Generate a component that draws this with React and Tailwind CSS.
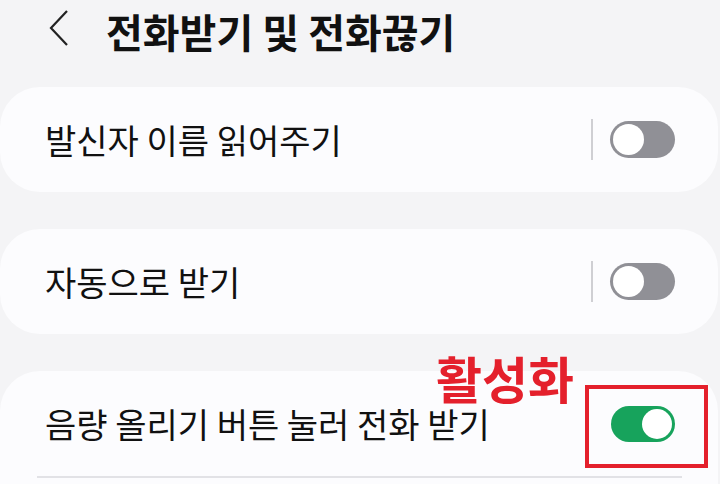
const font = { fontFamily: '"Noto Sans CJK KR", "Noto Sans", sans-serif' };

function Toggle({ on }) {
  if (on) {
    return (
      <div className="w-[64px] h-[36px] rounded-full bg-[#17a35c] flex items-center justify-end pr-[3px]">
        <div className="w-[30px] h-[30px] rounded-full bg-white" />
      </div>
    );
  }
  return (
    <div className="w-[65px] h-[37px] rounded-full bg-[#909096] flex items-center pl-[3px]">
      <div className="w-[31px] h-[31px] rounded-full bg-white" />
    </div>
  );
}

function Row({ label, on, divider }) {
  return (
    <div className="h-[105px] flex items-center pl-[45px] pr-[43px]">
      <span className="flex-1 text-[34px] text-[#111] leading-none">{label}</span>
      {divider && <div className="w-[2px] h-[41px] bg-[#cfcfd3] mr-[17px]" />}
      <Toggle on={on} />
    </div>
  );
}

export default function App() {
  return (
    <div className="w-[720px] h-[484px] overflow-hidden bg-[#f4f4f6]" style={font}>

      {/* HEADER */}
      <div className="h-[64px] flex items-center pl-[49px]">
        <svg width="20" height="36" viewBox="0 0 20 36" className="mt-[-8px]">
          <path d="M18 1 L2 18 L18 35" fill="none" stroke="#222" strokeWidth="2.2" />
        </svg>
        <h1 className="ml-[37px] text-[40px] font-bold text-[#111] leading-none mt-[-2px]">
          전화받기 및 전화끊기
        </h1>
      </div>

      {/* CARDS */}
      <div className="pt-[23px] flex flex-col gap-[37px] pr-[2px]">

        <div className="bg-[#fcfcfe] rounded-[40px]">
          <Row label="발신자 이름 읽어주기" divider />
        </div>

        <div className="bg-[#fcfcfe] rounded-[40px]">
          <Row label="자동으로 받기" divider />
        </div>

        <div className="relative bg-[#fcfcfe] rounded-t-[40px] h-[160px]">
          <Row label="음량 올리기 버튼 눌러 전화 받기" on />
          <div className="ml-[37px] mr-[36px] h-[2px] bg-[#e2e2e6]" />

          {/* annotation */}
          <span className="absolute left-[436px] top-[-19px] text-[50px] font-bold text-[#e4202c] leading-none">
            활성화
          </span>
          <div className="absolute left-[585px] top-[14px] w-[123px] h-[83px] border-[4px] border-[#e4202c]" />
        </div>

      </div>
    </div>
  );
}
